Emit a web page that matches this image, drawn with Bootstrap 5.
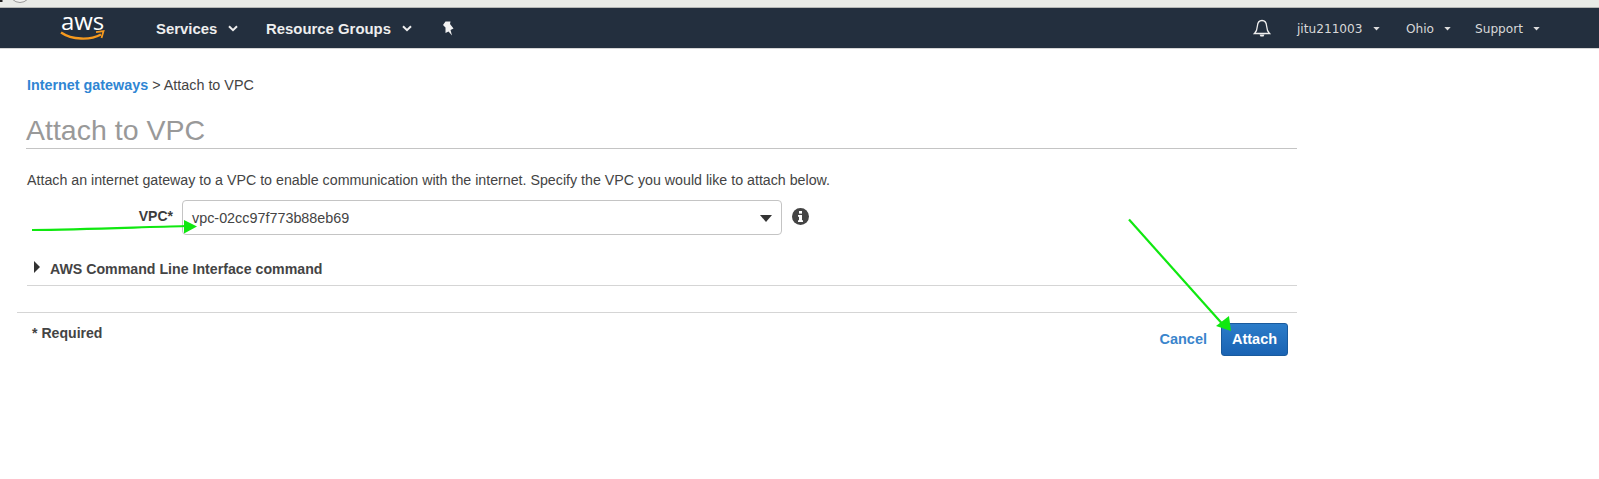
<!DOCTYPE html>
<html lang="en">
<head>
<meta charset="utf-8">
<title>Attach to VPC</title>
<link href="https://cdn.jsdelivr.net/npm/bootstrap@5.3.0/dist/css/bootstrap.min.css" rel="stylesheet">
<style>
html,body{height:100%;background:#fff;overflow:hidden}
body{font-family:"Liberation Sans",Arial,sans-serif;font-size:14.22px;color:#444;position:relative}
.chrome-strip{height:8px;background:#e9ebe7;border-bottom:1px solid #b5b7b5;overflow:hidden}
.chrome-strip svg{display:block}
.aws-bar{height:41px;background:#232f3e;border-bottom:1px solid #d5d5d5;color:#eee;padding-top:2px}
.aws-logo{width:45px;height:30px;margin-left:60px;margin-right:51px;position:relative;flex:none;top:-1px}
.aws-word{font-family:"Open Sans",sans-serif;font-size:24px;line-height:20px;color:#fff;letter-spacing:-.2px;display:block;text-align:center;margin-top:-2px}
.aws-logo svg{display:block;margin-top:-1px}
.svc{font-weight:700;font-size:14.9px;color:#eee;display:flex;align-items:center}
.chev{margin-left:11px}
.svc-a{width:110px}
.svc-b{width:176px}
.acct{font-family:"DejaVu Sans",sans-serif;font-size:12.15px;color:#d8d8d8;display:flex;align-items:center}
.acct svg{margin-left:10px}
.acct-a{margin-left:26px;width:109px}
.acct-b{width:69px}
.acct-c{width:66px;margin-right:58px}
.crumb{margin:27px 0 0 27px;line-height:18px;font-size:14.35px}
.crumb a{color:#2f86d3;font-weight:700;text-decoration:none}
.page-col{width:1297px;position:relative}
.title-box{margin:19px 0 0 26px;border-bottom:1px solid #c4c4c4;height:36px}
.title-box h1{font-size:28.5px;font-weight:400;color:#999;line-height:34px;margin:0}
.intro{margin:22px 0 0 27px;line-height:18px}
.form-line{margin-top:11px;height:35px}
.vpc-label{width:173px;text-align:right;font-weight:700;color:#3c3c3c;flex:none;padding-bottom:3px;font-size:14px}
.vpc-select{width:600px;height:35px;margin-left:9px;border:1px solid #c4c4c4;border-radius:4px;padding:2px 9px 0;color:#444;flex:none;font-size:14.37px}
.info-ico{margin-left:10px;margin-bottom:2px}
.cli{margin:19px 0 0 27px;height:32px;border-bottom:1px solid #d5d5d5;font-weight:700;color:#444;font-size:14.18px}
.cli svg{margin:0 10px 5px 7px}
.foot{margin:26px 0 0 17px;border-top:1px solid #d5d5d5;padding:10px 9px 0 15px}
.req{font-weight:700;font-size:14.1px;color:#444;margin-top:1px;line-height:18px}
.cancel-link{color:#3a85cc;font-weight:700;text-decoration:none;margin-right:14px;font-size:14.5px}
.attach-btn{width:67px;height:33px;padding:0;border:1px solid #195a9d;border-radius:3px;color:#fff;font-weight:700;font-size:14.5px;background:linear-gradient(#2b7cc9,#1a63b3);line-height:1}
.arrows{position:absolute;left:0;top:0;pointer-events:none}
</style>
</head>
<body>
<div class="chrome-strip"><svg width="60" height="8" viewBox="0 0 60 8"><circle cx="20" cy="-8" r="10.5" fill="#f2f2f0" stroke="#9a9a9a"/><path d="M0 0H2.5V2H0Z" fill="#222"/></svg></div>
<nav class="aws-bar d-flex align-items-center">
  <div class="aws-logo">
    <span class="aws-word">aws</span>
    <svg width="45" height="13" viewBox="0 0 45 13"><path d="M1 2.5C12 10 30 10.5 41 4.5" fill="none" stroke="#f79a1e" stroke-width="2.4"/><path d="M36 2.2 L43.5 1.2 L41.5 8" fill="none" stroke="#f79a1e" stroke-width="1.8"/></svg>
  </div>
  <div class="svc svc-a">Services<svg class="chev" width="10" height="7" viewBox="0 0 10 7"><path d="M1 1.2 5 5.2 9 1.2" fill="none" stroke="#eee" stroke-width="2"/></svg></div>
  <div class="svc svc-b">Resource Groups<svg class="chev" width="10" height="7" viewBox="0 0 10 7"><path d="M1 1.2 5 5.2 9 1.2" fill="none" stroke="#eee" stroke-width="2"/></svg></div>
  <svg width="14" height="16" viewBox="0 0 14 16"><path d="M3.5 0.5 8.5 0.5 8 3 11.5 7.5 8.5 9 10 14.5 6.5 10.5 3.5 12 3.5 6.5 1 4Z" fill="#f2f2f2"/></svg>
  <div class="ms-auto d-flex align-items-center">
    <svg width="18" height="20" viewBox="0 0 18 20"><path d="M9 1.5C6 1.5 4.6 4 4.4 7 4.2 10.5 3 13 1.5 14.5H16.5C15 13 13.8 10.5 13.6 7 13.4 4 12 1.5 9 1.5Z" fill="none" stroke="#eee" stroke-width="1.3"/><path d="M6.5 15.5H11.5L10.5 17.5H7.5Z" fill="#eee"/></svg>
    <div class="acct acct-a">jitu211003<svg width="7" height="4" viewBox="0 0 8 5"><path d="M0 0H8L4 4.5Z" fill="#ddd"/></svg></div>
    <div class="acct acct-b">Ohio<svg width="7" height="4" viewBox="0 0 8 5"><path d="M0 0H8L4 4.5Z" fill="#ddd"/></svg></div>
    <div class="acct acct-c">Support<svg width="7" height="4" viewBox="0 0 8 5"><path d="M0 0H8L4 4.5Z" fill="#ddd"/></svg></div>
  </div>
</nav>
<main class="page-col">
  <div class="crumb"><a href="#">Internet gateways</a> &gt; Attach to VPC</div>
  <div class="title-box"><h1>Attach to VPC</h1></div>
  <p class="intro mb-0">Attach an internet gateway to a VPC to enable communication with the internet. Specify the VPC you would like to attach below.</p>
  <div class="form-line d-flex align-items-center">
    <label class="vpc-label">VPC*</label>
    <div class="vpc-select d-flex align-items-center justify-content-between">
      <span>vpc-02cc97f773b88eb69</span>
      <svg width="12" height="7" viewBox="0 0 12 7"><path d="M0 0H12L6 7Z" fill="#333"/></svg>
    </div>
    <svg class="info-ico" width="17" height="17" viewBox="0 0 17 17"><circle cx="8.5" cy="8.5" r="8.5" fill="#444"/><rect x="7" y="3" width="3" height="2.6" fill="#fff"/><path d="M6 7H10V12.2H11V14H6V12.2H7V8.8H6Z" fill="#fff"/></svg>
  </div>
  <div class="cli d-flex align-items-center">
    <svg width="6" height="12" viewBox="0 0 6 12"><path d="M0 0 6 6 0 12Z" fill="#333"/></svg>AWS Command Line Interface command
  </div>
  <div class="foot d-flex justify-content-between align-items-start">
    <div class="req">* Required</div>
    <div class="d-flex align-items-center">
      <a class="cancel-link" href="#">Cancel</a>
      <button type="button" class="btn attach-btn">Attach</button>
    </div>
  </div>
</main>
<svg class="arrows" width="1599" height="479" viewBox="0 0 1599 479">
  <path d="M32 230C80 229.5 130 227.5 186 226" fill="none" stroke="#10e810" stroke-width="2.2"/>
  <path d="M184 220 197 226.5 184 233.5Z" fill="#10e810"/>
  <path d="M1129 219.5 1226 328" fill="none" stroke="#10e810" stroke-width="2.2"/>
  <path d="M1216 326 1229 316 1231 331Z" fill="#10e810"/>
</svg>
<script src="https://cdn.jsdelivr.net/npm/bootstrap@5.3.0/dist/js/bootstrap.bundle.min.js"></script>
</body>
</html>
